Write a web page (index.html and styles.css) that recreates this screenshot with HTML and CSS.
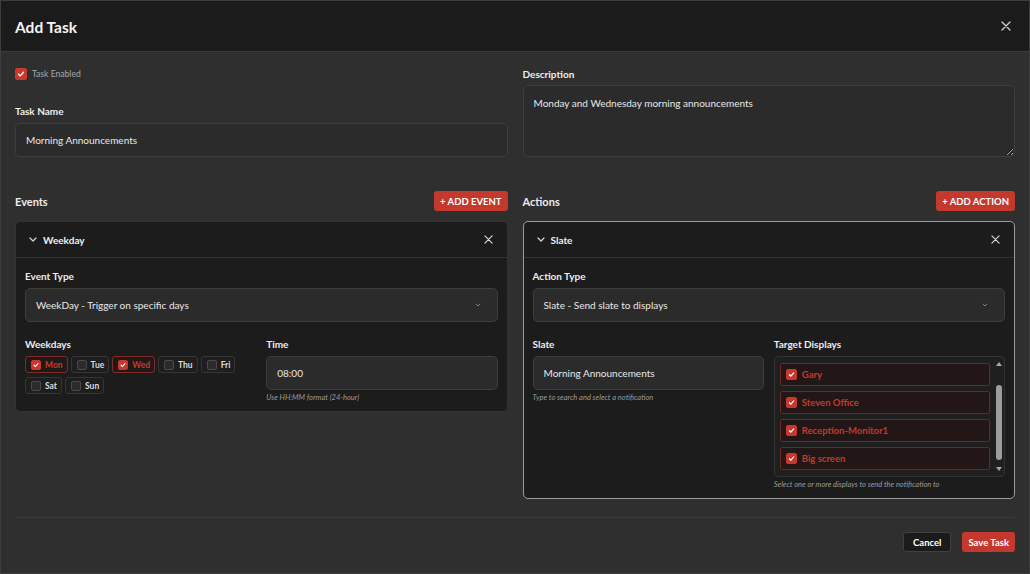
FILE: index.html
```html
<!DOCTYPE html>
<html lang="en">
<head>
<meta charset="utf-8">
<title>Add Task</title>
<link rel="stylesheet" href="styles.css">
</head>
<body>
<div class="dialog">
  <header class="dlg-head">
    <h1 class="dlg-title">Add Task</h1>
    <button class="icon-btn close-lg" aria-label="Close">
      <svg viewBox="0 0 10 10" width="10" height="10"><path d="M1 1L9 9M9 1L1 9" stroke="#cfcfcf" stroke-width="1.3" stroke-linecap="round"/></svg>
    </button>
  </header>

  <main class="dlg-body">
    <section class="two-col top-grid">
      <div class="col">
        <div class="check-row">
          <span class="cb on cb-12"><svg viewBox="0 0 12 12"><path d="M3 6.2L5.1 8.3L9 3.9" fill="none" stroke="#fff" stroke-width="1.6" stroke-linecap="round" stroke-linejoin="round"/></svg></span>
          <span class="check-label">Task Enabled</span>
        </div>
        <div class="field">
          <div class="label">Task Name</div>
          <input class="input" type="text" value="Morning Announcements">
        </div>
      </div>
      <div class="col">
        <div class="field">
          <div class="label">Description</div>
          <textarea class="input textarea">Monday and Wednesday morning announcements</textarea>
        </div>
      </div>
    </section>

    <section class="two-col ea-grid">
      <div class="panel">
        <div class="panel-head">
          <h2 class="panel-title">Events</h2>
          <button class="btn btn-red">+ ADD EVENT</button>
        </div>
        <div class="card">
          <div class="card-head">
            <span class="chev"><svg viewBox="0 0 8 5" width="8" height="5"><path d="M1 1L4 4L7 1" fill="none" stroke="#d8d8d8" stroke-width="1.2" stroke-linecap="round" stroke-linejoin="round"/></svg></span>
            <span class="card-title">Weekday</span>
            <button class="icon-btn close-sm" aria-label="Remove"><svg viewBox="0 0 10 10" width="9" height="9"><path d="M1 1L9 9M9 1L1 9" stroke="#d8d8d8" stroke-width="1.3" stroke-linecap="round"/></svg></button>
          </div>
          <div class="card-body">
            <div class="field">
              <div class="label">Event Type</div>
              <div class="input select">
                <span>WeekDay - Trigger on specific days</span>
                <svg viewBox="0 0 6 4" width="6" height="4"><path d="M0.8 0.8L3 3L5.2 0.8" fill="none" stroke="#8a8a8a" stroke-width="0.9"/></svg>
              </div>
            </div>
            <div class="inner-grid">
              <div class="field">
                <div class="label">Weekdays</div>
                <div class="chips">
                  <span class="chip on"><span class="cb on"><svg viewBox="0 0 12 12"><path d="M3 6.2L5.1 8.3L9 3.9" fill="none" stroke="#fff" stroke-width="1.6" stroke-linecap="round" stroke-linejoin="round"/></svg></span>Mon</span>
                  <span class="chip"><span class="cb"></span>Tue</span>
                  <span class="chip on"><span class="cb on"><svg viewBox="0 0 12 12"><path d="M3 6.2L5.1 8.3L9 3.9" fill="none" stroke="#fff" stroke-width="1.6" stroke-linecap="round" stroke-linejoin="round"/></svg></span>Wed</span>
                  <span class="chip"><span class="cb"></span>Thu</span>
                  <span class="chip"><span class="cb"></span>Fri</span>
                  <span class="chip"><span class="cb"></span>Sat</span>
                  <span class="chip"><span class="cb"></span>Sun</span>
                </div>
              </div>
              <div class="field">
                <div class="label">Time</div>
                <input class="input" type="text" value="08:00">
                <div class="hint">Use HH:MM format (24-hour)</div>
              </div>
            </div>
          </div>
        </div>
      </div>

      <div class="panel">
        <div class="panel-head">
          <h2 class="panel-title">Actions</h2>
          <button class="btn btn-red">+ ADD ACTION</button>
        </div>
        <div class="card card-active">
          <div class="card-head">
            <span class="chev"><svg viewBox="0 0 8 5" width="8" height="5"><path d="M1 1L4 4L7 1" fill="none" stroke="#d8d8d8" stroke-width="1.2" stroke-linecap="round" stroke-linejoin="round"/></svg></span>
            <span class="card-title">Slate</span>
            <button class="icon-btn close-sm" aria-label="Remove"><svg viewBox="0 0 10 10" width="9" height="9"><path d="M1 1L9 9M9 1L1 9" stroke="#d8d8d8" stroke-width="1.3" stroke-linecap="round"/></svg></button>
          </div>
          <div class="card-body">
            <div class="field">
              <div class="label">Action Type</div>
              <div class="input select">
                <span>Slate - Send slate to displays</span>
                <svg viewBox="0 0 6 4" width="6" height="4"><path d="M0.8 0.8L3 3L5.2 0.8" fill="none" stroke="#8a8a8a" stroke-width="0.9"/></svg>
              </div>
            </div>
            <div class="inner-grid">
              <div class="field">
                <div class="label">Slate</div>
                <input class="input" type="text" value="Morning Announcements">
                <div class="hint">Type to search and select a notification</div>
              </div>
              <div class="field">
                <div class="label">Target Displays</div>
                <div class="listbox">
                  <div class="list-items">
                    <div class="target"><span class="cb on cb-11"><svg viewBox="0 0 12 12"><path d="M3 6.2L5.1 8.3L9 3.9" fill="none" stroke="#fff" stroke-width="1.6" stroke-linecap="round" stroke-linejoin="round"/></svg></span>Gary</div>
                    <div class="target"><span class="cb on cb-11"><svg viewBox="0 0 12 12"><path d="M3 6.2L5.1 8.3L9 3.9" fill="none" stroke="#fff" stroke-width="1.6" stroke-linecap="round" stroke-linejoin="round"/></svg></span>Steven Office</div>
                    <div class="target"><span class="cb on cb-11"><svg viewBox="0 0 12 12"><path d="M3 6.2L5.1 8.3L9 3.9" fill="none" stroke="#fff" stroke-width="1.6" stroke-linecap="round" stroke-linejoin="round"/></svg></span>Reception-Monitor1</div>
                    <div class="target"><span class="cb on cb-11"><svg viewBox="0 0 12 12"><path d="M3 6.2L5.1 8.3L9 3.9" fill="none" stroke="#fff" stroke-width="1.6" stroke-linecap="round" stroke-linejoin="round"/></svg></span>Big screen</div>
                  </div>
                  <div class="scrollbar">
                    <svg class="arrow" viewBox="0 0 6 4" width="6" height="4"><path d="M0 4L3 0L6 4Z" fill="#a8a8a8"/></svg>
                    <div class="track"><div class="thumb"></div></div>
                    <svg class="arrow" viewBox="0 0 6 4" width="6" height="4"><path d="M0 0L6 0L3 4Z" fill="#a8a8a8"/></svg>
                  </div>
                </div>
                <div class="hint">Select one or more displays to send the notification to</div>
              </div>
            </div>
          </div>
        </div>
      </div>
    </section>

    <footer class="dlg-foot">
      <button class="btn btn-dark">Cancel</button>
      <button class="btn btn-red btn-save">Save Task</button>
    </footer>
  </main>
</div>
</body>
</html>
```

FILE: styles.css
```css
* { box-sizing: border-box; margin: 0; padding: 0; }
html, body { height: 100%; }
body {
  background: #2f2f2f;
  font-family: Lato, "Liberation Sans", sans-serif;
  color: #e4e4e4;
  overflow: hidden;
}
button { font-family: inherit; border: none; background: none; cursor: pointer; white-space: nowrap; }

.dialog {
  height: 574px;
  border: 1px solid #3d3d3d;
  background: #2f2f2f;
  display: flex;
  flex-direction: column;
}

.dlg-head {
  height: 51px;
  flex: none;
  background: #1b1b1b;
  border-bottom: 1px solid #3a3a3a;
  display: flex;
  align-items: center;
  justify-content: space-between;
  padding: 0 18px 0 14px;
}
.dlg-title { font-size: 15.5px; font-weight: 700; color: #f4f4f4; margin-top: 2px; }
.icon-btn { display: flex; align-items: center; justify-content: center; }
.close-lg svg { display: block; }

.dlg-body { flex: 1; padding: 15px 14px 0; display: flex; flex-direction: column; }

.two-col { display: grid; grid-template-columns: 1fr 1fr; column-gap: 15px; align-items: start; }

.check-row { display: flex; align-items: center; gap: 5px; height: 12px; margin-bottom: 24px; margin-top: 1px; }
.check-label { font-size: 8.6px; color: #a8a8a8; }

.cb {
  width: 10px; height: 10px; flex: none;
  border-radius: 2px;
  background: #2b2b2b;
  border: 1px solid #4a4a4a;
  display: inline-flex; align-items: center; justify-content: center;
}
.cb svg { width: 100%; height: 100%; display: block; }
.cb.on { background: #c9382d; border-color: #c9382d; }
.cb-12 { width: 12px; height: 12px; }
.cb-11 { width: 11px; height: 11px; }

.field { display: flex; flex-direction: column; }
.label { font-size: 10px; font-weight: 700; color: #ededed; line-height: 14px; margin-bottom: 5px; }

.input {
  height: 34px;
  width: 100%;
  background: #2b2b2b;
  border: 1px solid #3e3e3e;
  border-radius: 5px;
  color: #e8e8e8;
  font-family: inherit;
  font-size: 10px;
  padding: 0 10px;
  outline: none;
}
.textarea {
  height: 72px;
  padding: 10px 10px;
  line-height: 14px;
  resize: vertical;
  margin-top: -1px;
}

.ea-grid { margin-top: 34px; }
.panel-head { display: flex; justify-content: space-between; align-items: center; height: 20px; margin-bottom: 10px; }
.panel-title { font-size: 11px; font-weight: 700; color: #ececec; }

.btn { height: 20px; border-radius: 3px; font-size: 9.5px; font-weight: 700; padding: 0 6px; color: #fff; }
.btn-red { background: #c3392e; }
.btn-dark { background: #1b1b1b; border: 1px solid #404040; padding: 0 9px; }
.btn-save { padding: 0 6px; }

.card {
  background: #1c1c1c;
  border: 1px solid #333;
  border-radius: 5px;
}
.card-active { border-color: #9c9c9c; }
.card-head {
  height: 36px;
  border-bottom: 1px solid #333;
  display: flex;
  align-items: center;
  padding: 0 14px 0 13px;
}
.chev { width: 8px; display: flex; margin-right: 6px; }
.chev svg { display: block; }
.card-title { font-size: 10px; font-weight: 700; color: #eee; flex: 1; }
.close-sm svg { display: block; }

.card-body { padding: 11px 9px 8px; }
.select { display: flex; align-items: center; justify-content: space-between; }
.select svg { margin-right: 6px; }

.inner-grid { display: grid; grid-template-columns: 1fr 1fr; column-gap: 10px; margin-top: 15px; align-items: start; }

.chips { display: flex; flex-wrap: wrap; gap: 4px 3px; }
.chip {
  height: 17px;
  display: inline-flex; align-items: center; gap: 4px;
  padding: 0 4px 0 5px;
  border: 1px solid #353535;
  border-radius: 3px;
  background: #1e1e1e;
  font-size: 8.5px; font-weight: 700; color: #dcdcdc;
}
.chip.on { border-color: #7e2c25; color: #c6392e; background: #211918; }

.hint { font-size: 7.5px; font-style: italic; color: #9a9a9a; margin-top: 3px; line-height: 10px; }

.listbox {
  height: 121px;
  border: 1px solid #333;
  border-radius: 4px;
  background: #1f1f1f;
  display: flex;
  padding: 6px 1px 5px 5px;
  gap: 4px;
}
.list-items { flex: 1; display: flex; flex-direction: column; gap: 5px; }
.target {
  height: 23px;
  display: flex; align-items: center; gap: 5px;
  padding: 0 5px;
  border: 1px solid #6c2922;
  border-radius: 2px;
  background: #221716;
  font-size: 9.5px; font-weight: 700; color: #c4392e;
}
.scrollbar { width: 9px; display: flex; flex-direction: column; align-items: center; gap: 3px; margin-top: -1px; }
.track { flex: 1; width: 100%; display: flex; justify-content: center; padding: 16px 0 4px; }
.thumb { width: 6px; height: 100%; background: #9d9d9d; border-radius: 3px; }
.arrow { display: block; }

.dlg-foot {
  margin-top: 18px;
  border-top: 1px solid #3b3b3b;
  padding-top: 14px;
  display: flex;
  justify-content: flex-end;
  gap: 11px;
}
```
